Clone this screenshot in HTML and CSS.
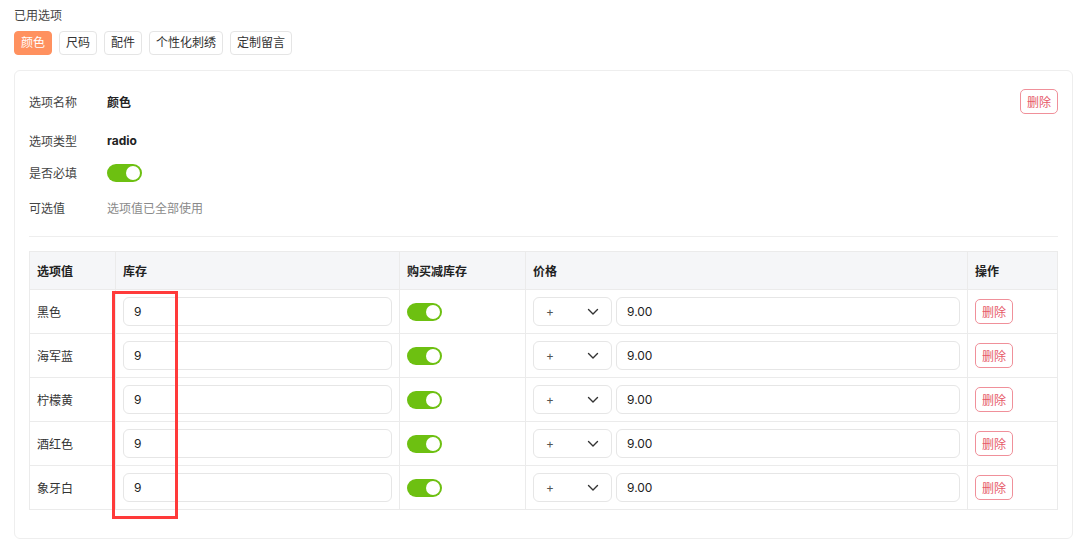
FILE: index.html
```html
<!DOCTYPE html>
<html lang="zh-CN">
<head>
  <meta charset="UTF-8">
  <title>选项设置</title>
  <link rel="stylesheet" href="styles.css">
</head>
<body>
  <div class="page">
    <div class="used-title">已用选项</div>
    <div class="tags">
      <span class="tag active">颜色</span>
      <span class="tag">尺码</span>
      <span class="tag">配件</span>
      <span class="tag">个性化刺绣</span>
      <span class="tag">定制留言</span>
    </div>

    <div class="card">
      <div class="form">
        <div class="label">选项名称</div>
        <div class="value bold">颜色</div>
        <div class="side"><button class="btn-del">删除</button></div>

        <div class="label">选项类型</div>
        <div class="value bold">radio</div>
        <div></div>

        <div class="label">是否必填</div>
        <div class="value"><span class="switch"></span></div>
        <div></div>

        <div class="label">可选值</div>
        <div class="value muted">选项值已全部使用</div>
        <div></div>
      </div>

      <div class="divider"></div>

      <table class="grid">
        <thead>
          <tr>
            <th class="c-name">选项值</th>
            <th class="c-stock">库存</th>
            <th class="c-sub">购买减库存</th>
            <th class="c-price">价格</th>
            <th class="c-op">操作</th>
          </tr>
        </thead>
        <tbody id="rows"></tbody>
      </table>
    </div>

    <div class="mark"></div>
  </div>

  <script>
    const names = ['黑色', '海军蓝', '柠檬黄', '酒红色', '象牙白'];
    const tbody = document.getElementById('rows');
    names.forEach(n => {
      const tr = document.createElement('tr');
      tr.innerHTML =
        '<td>' + n + '</td>' +
        '<td><div class="input">9</div></td>' +
        '<td><span class="switch"></span></td>' +
        '<td><div class="price">' +
          '<div class="select"><span>+</span>' +
          '<svg width="12" height="8" viewBox="0 0 12 8"><path d="M1.5 1.5 6 6l4.5-4.5" fill="none" stroke="#333" stroke-width="1.4" stroke-linecap="round" stroke-linejoin="round"/></svg></div>' +
          '<div class="input">9.00</div>' +
        '</div></td>' +
        '<td><button class="btn-del">删除</button></td>';
      tbody.appendChild(tr);
    });
  </script>
</body>
</html>
```

FILE: styles.css
```css
html, body {
  margin: 0;
  padding: 0;
  background: #fff;
  font-family: Inter, "Noto Sans CJK SC", sans-serif;
  font-size: 12px;
  color: #333;
}
.page {
  position: relative;
  padding: 7px 7px 0 14px;
}
.used-title {
  line-height: 17px;
  color: #444;
}
.tags {
  display: flex;
  gap: 7px;
  margin-top: 7px;
}
.tag {
  height: 24px;
  line-height: 22px;
  padding: 0 6px;
  border: 1px solid #e5e5e5;
  border-radius: 4px;
  box-sizing: border-box;
  color: #333;
}
.tag.active {
  background: #ff915f;
  border-color: #ff915f;
  color: #fff;
}
.card {
  margin-top: 15px;
  border: 1px solid #eeeeee;
  border-radius: 6px;
  padding: 11px 14px 28px 14px;
}
.form {
  display: grid;
  grid-template-columns: 78px 1fr auto;
  grid-template-rows: 39px 39px 25px 45px;
  align-items: center;
}
.label {
  color: #444;
}
.value.bold {
  font-weight: 700;
  color: #222;
}
.value.muted {
  color: #8a8a8a;
}
.side {
  align-self: center;
}
.btn-del {
  font-family: inherit;
  font-size: 12px;
  height: 25px;
  padding: 0 6px;
  background: #fff;
  border: 1px solid #f0909a;
  color: #e65a68;
  border-radius: 5px;
}
.switch {
  display: inline-block;
  position: relative;
  width: 35px;
  height: 18px;
  background: #6dc011;
  border-radius: 9px;
  vertical-align: middle;
}
.switch::after {
  content: "";
  position: absolute;
  right: 2px;
  top: 2px;
  width: 14px;
  height: 14px;
  background: #fff;
  border-radius: 50%;
}
.divider {
  height: 1px;
  background: #eeeeee;
  margin: 6px 0 14px;
}
.grid {
  width: 100%;
  border-collapse: collapse;
  border: 1px solid #ebebeb;
}
.grid th, .grid td {
  border: 1px solid #ebebeb;
  text-align: left;
  padding: 0 7px;
}
.grid th {
  background: #f5f6f8;
  height: 37px;
  font-weight: 700;
  color: #222;
}
.grid td {
  height: 43px;
  color: #333;
}
.c-name { width: 71px; }
.c-stock { width: 269px; }
.c-sub { width: 111px; }
.c-price { width: 427px; }
.input {
  height: 29px;
  line-height: 27px;
  box-sizing: border-box;
  border: 1px solid #e6e6e6;
  border-radius: 6px;
  padding: 0 10px;
  color: #222;
}
.price {
  display: flex;
  gap: 4px;
}
.price .input {
  flex: 1;
}
.select {
  width: 79px;
  height: 29px;
  box-sizing: border-box;
  border: 1px solid #e6e6e6;
  border-radius: 6px;
  display: flex;
  align-items: center;
  justify-content: space-between;
  padding: 0 12px 0 12px;
  color: #555;
}
.mark {
  position: absolute;
  left: 112px;
  top: 291px;
  width: 66px;
  height: 228px;
  box-sizing: border-box;
  border: 3px solid #ff3a3a;
}
```
